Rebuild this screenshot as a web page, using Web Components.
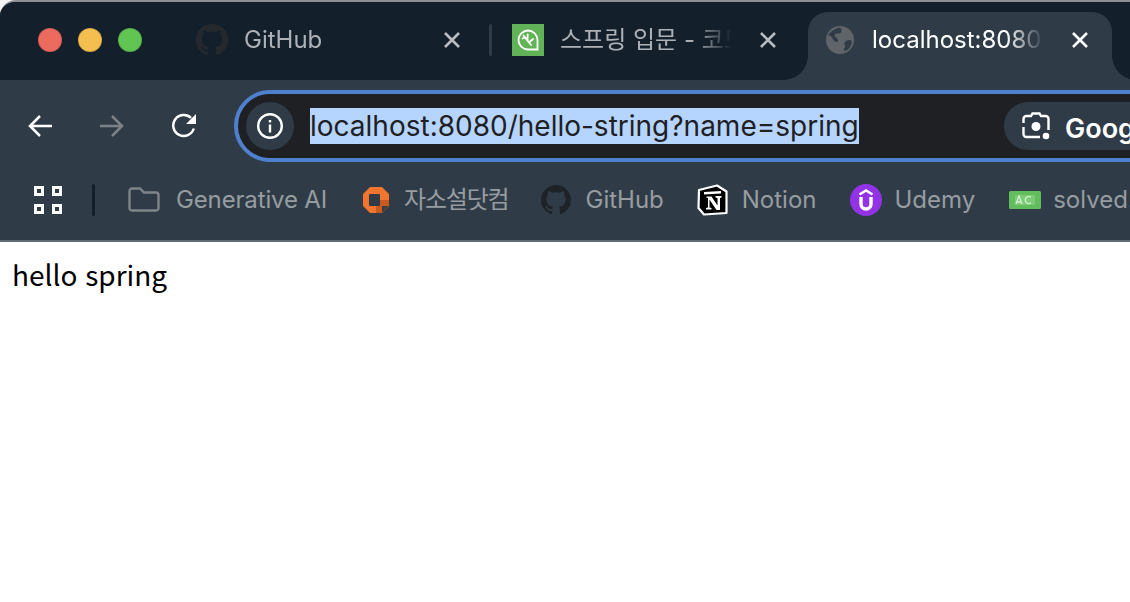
<!DOCTYPE html>
<html lang="ko">
<head>
<meta charset="utf-8">
<title>localhost:8080/hello-string?name=spring</title>
<style>
  html, body { margin: 0; height: 100%; background: #fff; overflow: hidden; }
  body { font-family: Inter, "Noto Sans CJK KR", sans-serif; }
</style>
</head>
<body>
<browser-window>
  <tab-strip>
    <chrome-tab style="width:309px" title-width="184" text="GitHub">
      <svg slot="icon" width="32" height="32" viewBox="0 0 16 16"><path fill="#24292e" d="M8 0C3.58 0 0 3.58 0 8c0 3.54 2.29 6.53 5.47 7.59.4.07.55-.17.55-.38 0-.19-.01-.82-.01-1.49-2.01.37-2.53-.49-2.69-.94-.09-.23-.48-.94-.82-1.13-.28-.15-.68-.52-.01-.53.63-.01 1.08.58 1.23.82.72 1.21 1.87.87 2.33.66.07-.52.28-.87.51-1.07-1.78-.2-3.64-.89-3.64-3.95 0-.87.31-1.59.82-2.15-.08-.2-.36-1.02.08-2.12 0 0 .67-.21 2.2.82.64-.18 1.32-.27 2-.27.68 0 1.36.09 2 .27 1.53-1.04 2.2-.82 2.2-.82.44 1.1.16 1.92.08 2.12.51.56.82 1.27.82 2.15 0 3.07-1.87 3.75-3.65 3.95.29.25.54.73.54 1.48 0 1.07-.01 1.93-.01 2.2 0 .21.15.46.55.38A8.013 8.013 0 0016 8c0-4.42-3.58-8-8-8z"/></svg>
    </chrome-tab>
    <span class="tab-divider"></span>
    <chrome-tab style="width:310px;margin-left:4px" title-width="184" text="스프링 입문 - 코드로 배우는 스프링">
      <svg slot="icon" width="32" height="32" viewBox="0 0 32 32"><rect width="32" height="32" fill="#62b257"/><path d="M16 6.500a9.500 9.500 0 1 0 0 19h9.500V16A9.500 9.500 0 0 0 16 6.500z" fill="none" stroke="#fff" stroke-width="1.800"/><path d="M11.500 11.500L19 21M15.500 16.500l.2-6M17 18.500l4-3.500M13 13.500l-2.500 1" fill="none" stroke="#fff" stroke-width="1.800" stroke-linecap="round"/></svg>
    </chrome-tab>
    <chrome-tab active style="width:304px" title-width="184" text="localhost:8080/hello-string?name=spring">
      <svg slot="icon" width="32" height="32" viewBox="0 0 32 32"><circle cx="16" cy="16" r="14" fill="#5f6468"/><path d="M4 11c3-4 7-6.500 12-7.500 2 2 2 4 1 5-2 2-5 0-6 2-1 3 3 3 3 6 0 3-4 1-5-1-1-3-3-4-5-4.500zM21 18c2-2 4-2 6-2 1 1 1 3 0 5-1 3-3 5-6 6-2-1-1-3 0-4 1-2-2-3 0-5z" fill="#2f3c48"/></svg>
    </chrome-tab>
  </tab-strip>
  <nav-bar>
    <omni-box url="localhost:8080/hello-string?name=spring"></omni-box>
  </nav-bar>
  <bookmark-bar>
    <bookmark-item text="Generative AI" gap="16" style="margin-right:35px;letter-spacing:-.15px">
      <svg slot="icon" width="32" height="26" viewBox="0 0 32 26"><path d="M1.500 4a2.500 2.500 0 0 1 2.500-2.500h8l4 4h12a2.500 2.500 0 0 1 2.500 2.500v13a2.500 2.500 0 0 1-2.500 2.500H4a2.500 2.500 0 0 1-2.500-2.500z" fill="none" stroke="#7f8488" stroke-width="2.400"/></svg>
    </bookmark-item>
    <bookmark-item text="자소설닷컴" gap="14" style="margin-right:33px;letter-spacing:-1.2px">
      <svg slot="icon" width="28" height="28" viewBox="0 0 28 28"><path d="M8 1h12l7 7v12l-7 7H8l-7-7V8z" fill="#f0752f"/><path d="M14 14h13v6l-7 7h-6z" fill="#c9591f"/><path d="M20 20h7l-7 7z" fill="#3c3f42"/><rect x="7" y="8" width="11" height="12" rx="1" fill="#2f3c48"/></svg>
    </bookmark-item>
    <bookmark-item text="GitHub" gap="14" style="margin-right:33px">
      <svg slot="icon" width="30" height="30" viewBox="0 0 16 16"><path fill="#1e2328" d="M8 0C3.58 0 0 3.58 0 8c0 3.54 2.29 6.53 5.47 7.59.4.07.55-.17.55-.38 0-.19-.01-.82-.01-1.49-2.01.37-2.53-.49-2.69-.94-.09-.23-.48-.94-.82-1.13-.28-.15-.68-.52-.01-.53.63-.01 1.08.58 1.23.82.72 1.21 1.87.87 2.33.66.07-.52.28-.87.51-1.07-1.78-.2-3.64-.89-3.64-3.95 0-.87.31-1.59.82-2.15-.08-.2-.36-1.02.08-2.12 0 0 .67-.21 2.2.82.64-.18 1.32-.27 2-.27.68 0 1.36.09 2 .27 1.53-1.04 2.2-.82 2.2-.82.44 1.1.16 1.92.08 2.12.51.56.82 1.27.82 2.15 0 3.07-1.87 3.75-3.65 3.95.29.25.54.73.54 1.48 0 1.07-.01 1.93-.01 2.2 0 .21.15.46.55.38A8.013 8.013 0 0016 8c0-4.42-3.58-8-8-8z"/></svg>
    </bookmark-item>
    <bookmark-item text="Notion" gap="14" style="margin-right:34px">
      <svg slot="icon" width="31" height="32" viewBox="0 0 31 32"><path d="M2 6L20 1.500 29.500 7.500V29L7 30.500 1.500 24z" fill="#000" stroke="#fff" stroke-width="2.200" stroke-linejoin="round"/><path d="M7 8l17-1v2.500L7 10.500z" fill="#fff"/><path d="M9.500 12.500h5l6 9v-7.500l-2-.5v-1.500h6v1.500l-1.500.5V26h-3.500l-7-10.500v8l2 .5v1.500H9v-1.500l2-.5V14l-1.500-.2z" fill="#fff"/></svg>
    </bookmark-item>
    <bookmark-item text="Udemy" gap="12" style="margin-right:34px">
      <svg slot="icon" width="32" height="32" viewBox="0 0 32 32"><circle cx="16" cy="16" r="16" fill="#9333e6"/><path d="M9.500 10.500L16 6.500l6.500 4" fill="none" stroke="#fff" stroke-width="2.600"/><path d="M11 13v7a5 5 0 0 0 10 0v-7" fill="none" stroke="#fff" stroke-width="3.400"/></svg>
    </bookmark-item>
    <bookmark-item text="solved.ac" gap="12">
      <svg slot="icon" width="32" height="18" viewBox="0 0 32 18"><rect width="32" height="18" rx="1.500" fill="#62bd5c"/><rect x="6" y="4" width="20" height="10" fill="#7ccb76"/><path d="M7 13l3-8 3 8M8 11h4M22 6.200a3.500 3.500 0 1 0 0 5.600" fill="none" stroke="#d7f0d4" stroke-width="1.300"/></svg>
    </bookmark-item>
  </bookmark-bar>
  <page-body>hello spring</page-body>
</browser-window>

<script>
customElements.define('browser-window', class extends HTMLElement {
  constructor() {
    super();
    this.attachShadow({ mode: 'open' });
    this.shadowRoot.innerHTML = `<style>
      :host { display: flex; flex-direction: column; height: 602px; background: #f4f4f4; overflow: hidden; }
      .frame { flex: 1; display: flex; flex-direction: column; min-height: 0; border-top: 2px solid #8c9093; border-top-left-radius: 16px; background: #13202c; overflow: hidden; }
    </style><div class="frame"><slot></slot></div>`;
  }
});

customElements.define('tab-strip', class extends HTMLElement {
  constructor() {
    super();
    this.attachShadow({ mode: 'open' });
    this.shadowRoot.innerHTML = `<style>
      :host { display: flex; height: 78px; flex: none; background: #13202c; padding-left: 38px; box-sizing: border-box; }
      .lights { display: flex; gap: 16px; margin-top: 26px; margin-right: 38px; flex: none; height: 24px; }
      .lights span { width: 24px; height: 24px; border-radius: 50%; box-sizing: border-box; border: 1px solid rgba(0,0,0,.12); }
      .red { background: #ed6a5e; } .amber { background: #f5bf4f; } .green { background: #61c554; }
      ::slotted(.tab-divider) { flex: none; width: 3px; height: 32px; margin: 22px 0 0; border-radius: 2px; background: #2f3c48; }
    </style>
    <div class="lights"><span class="red"></span><span class="amber"></span><span class="green"></span></div>
    <slot></slot>`;
  }
});

customElements.define('chrome-tab', class extends HTMLElement {
  constructor() {
    super();
    this.attachShadow({ mode: 'open' });
    const text = this.getAttribute('text');
    const width = this.getAttribute('title-width');
    this.shadowRoot.innerHTML = `<style>
      :host { display: block; flex: none; box-sizing: border-box; height: 68px; margin-top: 10px; position: relative; color: #adb1b6; }
      :host([active]) { background: #2f3c48; color: #fff; border-radius: 20px 20px 0 0; margin-left: 2px; }
      :host([active])::before, :host([active])::after { content: ""; position: absolute; bottom: 0; width: 24px; height: 24px; }
      :host([active])::before { left: -24px; background: radial-gradient(circle at 0 0, transparent 23.5px, #2f3c48 24px); }
      :host([active])::after { right: -24px; background: radial-gradient(circle at 100% 0, transparent 23.5px, #2f3c48 24px); }
      .row { display: flex; align-items: center; height: 56px; padding-left: 16px; }
      .icon { display: flex; width: 32px; height: 32px; flex: none; }
      .title { margin-left: 16px; flex: none; font-size: 24px; line-height: 32px; white-space: nowrap; overflow: hidden; width: ${width}px;
        -webkit-mask-image: linear-gradient(to right, #000 calc(100% - 50px), transparent calc(100% - 12px)); }
      .close { margin-left: 16px; flex: none; display: flex; }
    </style>
    <div class="row">
      <span class="icon"><slot name="icon"></slot></span>
      <span class="title">${text}</span>
      <span class="close"><svg width="16" height="16" viewBox="0 0 16 16"><path d="M1 1l14 14M15 1L1 15" stroke="${this.hasAttribute('active') ? '#fff' : '#b9bcc0'}" stroke-width="2.600" fill="none"/></svg></span>
    </div>`;
  }
});

customElements.define('nav-bar', class extends HTMLElement {
  constructor() {
    super();
    this.attachShadow({ mode: 'open' });
    this.shadowRoot.innerHTML = `<style>
      :host { display: flex; flex: none; height: 92px; background: #2f3c48; align-items: center; padding-left: 4px; box-sizing: border-box; }
      button { all: unset; display: flex; align-items: center; justify-content: center; width: 72px; height: 48px; flex: none; }
      .spacer { width: 14px; flex: none; }
      ::slotted(omni-box) { flex: 1; min-width: 0; margin-right: -40px; }
    </style>
    <button aria-label="back"><svg width="26" height="24" viewBox="0 0 26 24"><path d="M25 12H3M13 2L3 12l10 10" fill="none" stroke="#fff" stroke-width="2.500"/></svg></button>
    <button aria-label="forward"><svg width="26" height="24" viewBox="0 0 26 24"><path d="M1 12h22M13 2l10 10-10 10" fill="none" stroke="#7c8287" stroke-width="2.500"/></svg></button>
    <button aria-label="reload"><svg width="26" height="26" viewBox="0 0 26 26"><path d="M22.800 15.500A10.500 10.500 0 1 1 20 4.800" fill="none" stroke="#fff" stroke-width="2.500"/><path d="M25 1v10H15z" fill="#fff"/></svg></button>
    <span class="spacer"></span>
    <slot></slot>`;
  }
});

customElements.define('omni-box', class extends HTMLElement {
  constructor() {
    super();
    this.attachShadow({ mode: 'open' });
    this.shadowRoot.innerHTML = `<style>
      :host { display: flex; align-items: center; box-sizing: border-box; height: 72px; border: 4px solid #4f80ce; border-radius: 36px; background: #1f2023; padding-left: 8px; }
      .info { width: 48px; height: 48px; border-radius: 50%; background: #2f3c48; display: flex; align-items: center; justify-content: center; flex: none; }
      .url { margin-left: 16px; flex: none; background: #b5d5ff; color: #1f2023; font-size: 28px; line-height: 36px; height: 36px; white-space: nowrap; }
      .fill { flex: 1; min-width: 0; }
      .lens { display: flex; align-items: center; flex: none; height: 48px; width: 152px; box-sizing: border-box; padding-left: 18px; gap: 15px; border-radius: 24px; background: #2f3c48; color: #fff; font-size: 27px; font-weight: 600; white-space: nowrap; overflow: hidden; margin-right: 10px; }
    </style>
    <span class="info"><svg width="28" height="28" viewBox="0 0 28 28"><circle cx="14" cy="14" r="11.800" fill="none" stroke="#fff" stroke-width="2.400"/><rect x="12.800" y="12.500" width="2.400" height="8" fill="#fff"/><rect x="12.800" y="8" width="2.400" height="2.500" fill="#fff"/></svg></span>
    <span class="url">${this.getAttribute('url')}</span>
    <span class="fill"></span>
    <span class="lens"><svg width="28" height="28" viewBox="0 0 28 28" style="flex:none"><path d="M1.500 11V7a3 3 0 0 1 3-3H9l1.500-2.500h7L19 4h4.500a3 3 0 0 1 3 3v11M1.500 15v7a3 3 0 0 0 3 3H18" fill="none" stroke="#fff" stroke-width="2.400"/><circle cx="14" cy="14.500" r="4.500" fill="#fff"/><circle cx="24" cy="24" r="3.300" fill="#fff"/></svg>Google 렌즈</span>`;
  }
});

customElements.define('bookmark-bar', class extends HTMLElement {
  constructor() {
    super();
    this.attachShadow({ mode: 'open' });
    this.shadowRoot.innerHTML = `<style>
      :host { display: flex; flex: none; height: 70px; box-sizing: border-box; background: #2f3c48; border-bottom: 2px solid #5f6b75; padding: 0 0 12px 34px; align-items: center; white-space: nowrap; overflow: hidden; }
      .apps { display: grid; grid-template-columns: 10px 10px; gap: 8px; flex: none; }
      .apps span { width: 10px; height: 10px; box-sizing: border-box; border: 3px solid #fff; }
      .sep { width: 3px; height: 32px; margin: 0 33px 0 30px; background: #13202c; border-radius: 2px; flex: none; }
    </style>
    <div class="apps"><span></span><span></span><span></span><span></span></div>
    <span class="sep"></span>
    <slot></slot>`;
  }
});

customElements.define('bookmark-item', class extends HTMLElement {
  constructor() {
    super();
    this.attachShadow({ mode: 'open' });
    this.shadowRoot.innerHTML = `<style>
      :host { display: inline-flex; align-items: center; gap: ${this.getAttribute('gap')}px; flex: none; color: #979ca1; font-size: 24px; line-height: 32px; }
      .icon { display: flex; }
    </style>
    <span class="icon"><slot name="icon"></slot></span>
    <span>${this.getAttribute('text')}</span>`;
  }
});

customElements.define('page-body', class extends HTMLElement {
  constructor() {
    super();
    this.attachShadow({ mode: 'open' });
    this.shadowRoot.innerHTML = `<style>
      :host { display: block; flex: 1; background: #fff; color: #000; padding: 14px 12px; font-family: "Noto Sans CJK KR", sans-serif; font-size: 28px; line-height: 36px; }
    </style><slot></slot>`;
  }
});
</script>
</body>
</html>
